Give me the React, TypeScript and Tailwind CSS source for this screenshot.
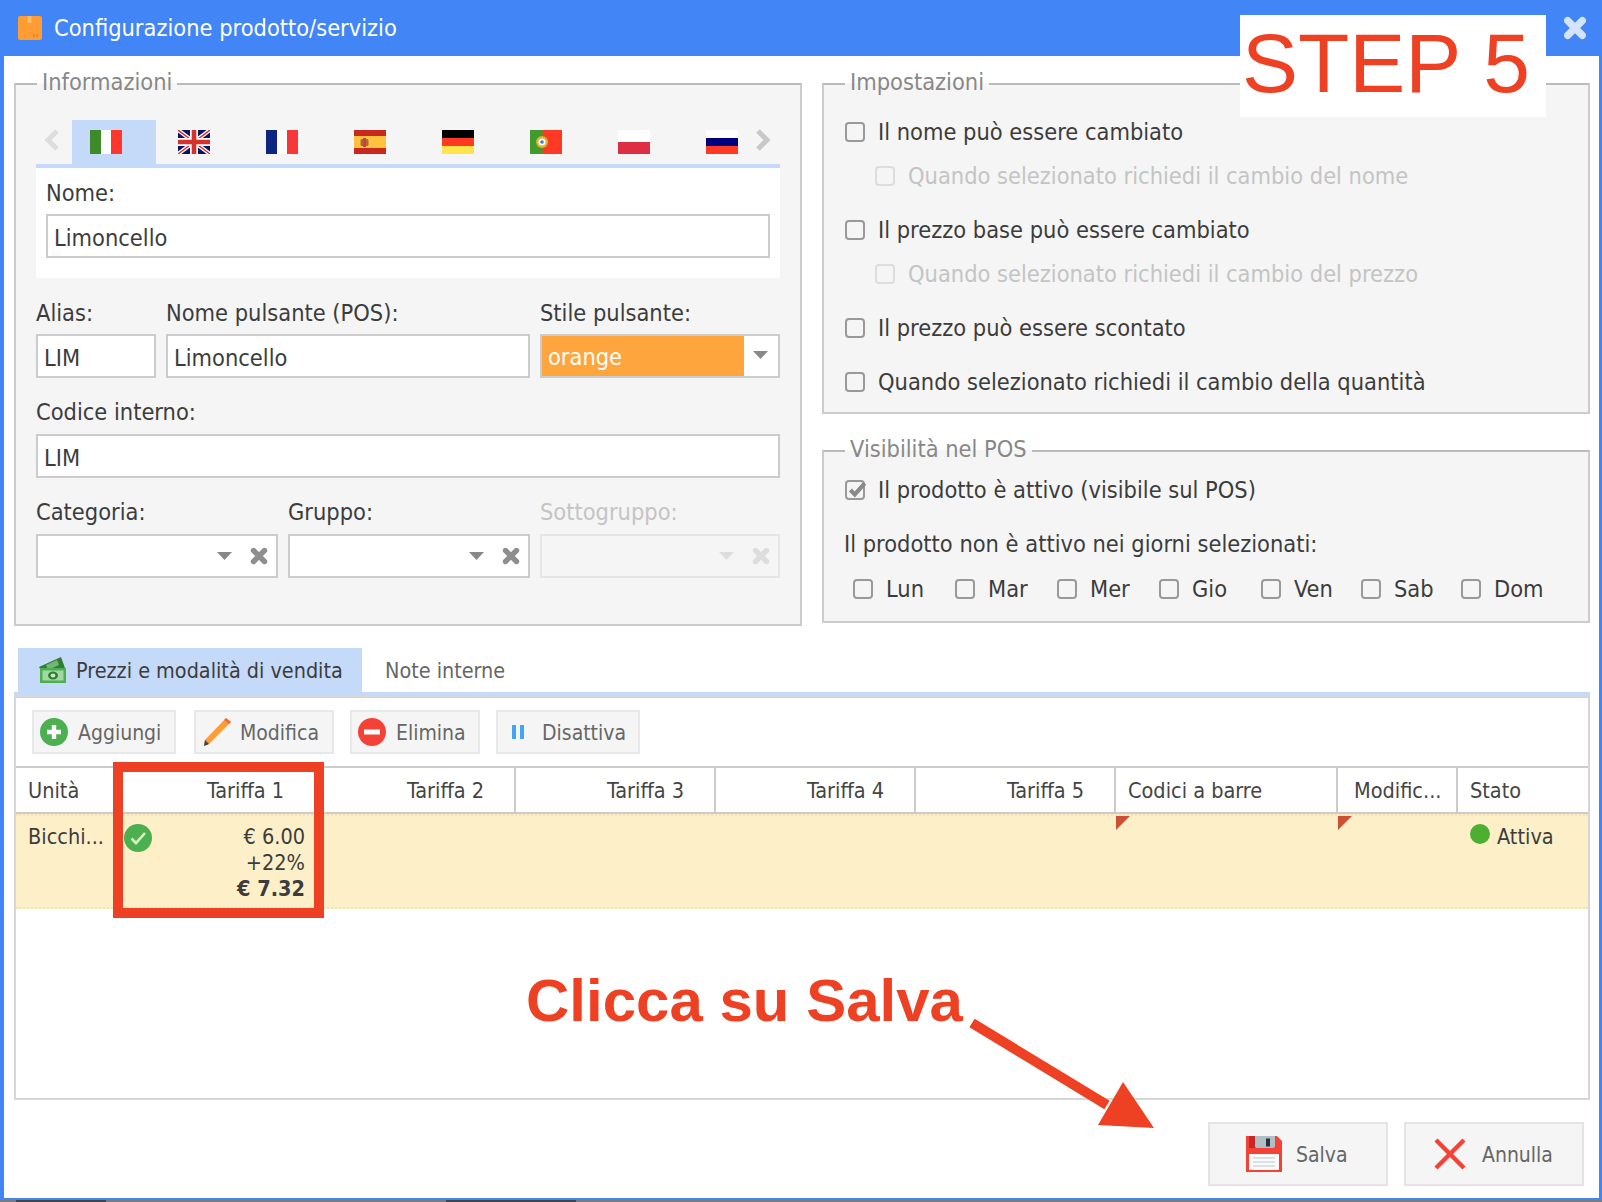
import type { ReactNode } from "react";

const FONT = "font-['DejaVu_Sans',sans-serif] font-stretch-condensed";

function Check({ on, off, className = "" }: { on?: boolean; off?: boolean; className?: string }) {
  return (
    <span
      className={`relative block h-[20px] w-[20px] shrink-0 rounded-[4px] border-2 ${off ? "border-[#dddddd]" : "border-[#999999]"} ${className}`}
    >
      {on && (
        <svg viewBox="0 0 20 20" className="absolute left-[-1px] top-[-3px] h-[22px] w-[22px]">
          <path d="M4 10l4 4 9-10" fill="none" stroke="#8a8a8a" strokeWidth="3.8" />
        </svg>
      )}
    </span>
  );
}

function Opt({ text, sub, className = "" }: { text: string; sub?: boolean; className?: string }) {
  return (
    <div className={`flex h-[28px] items-center gap-[13px] ${sub ? "pl-[51px] text-[#c4c4c4]" : "pl-[21px]"} ${className}`}>
      <Check off={sub} />
      <span className="relative top-[1px]">{text}</span>
    </div>
  );
}

function Box({ title, className, legendClass, children }: { title: string; className: string; legendClass: string; children: ReactNode }) {
  return (
    <fieldset className={`border-2 border-[#cccccc] border-t-[#bbbbbb] bg-[#f5f5f5] ${className}`}>
      <legend className={`px-[5px] leading-[28px] text-[#888888] ${legendClass}`}>
        <span className="relative top-[-2px]">{title}</span>
      </legend>
      {children}
    </fieldset>
  );
}

function Label({ children, off }: { children: ReactNode; off?: boolean }) {
  return <div className={`h-[28px] leading-[30px] ${off ? "text-[#c4c4c4]" : ""}`}>{children}</div>;
}

function Input({ value, className = "" }: { value: string; className?: string }) {
  return (
    <div className={`h-[44px] border-2 border-[#cccccc] bg-white pl-[6px] leading-[45px] ${className}`}>{value}</div>
  );
}

function Tri({ off }: { off?: boolean }) {
  return (
    <svg viewBox="0 0 15 8" className="h-[8px] w-[15px] shrink-0">
      <path d="M0 0h15L7.5 8z" fill={off ? "#dddddd" : "#888888"} />
    </svg>
  );
}

function ChunkyX({ color, className }: { color: string; className: string }) {
  return (
    <svg viewBox="0 0 18 18" className={className}>
      <path d="M3.5 3.5l11 11M14.5 3.5l-11 11" stroke={color} strokeWidth="5.4" strokeLinecap="round" />
    </svg>
  );
}

function Combo({ off }: { off?: boolean }) {
  return (
    <div
      className={`flex h-[44px] items-center justify-end gap-[18px] border-2 pr-[8px] ${off ? "border-[#e6e6e6] bg-[#f5f5f5]" : "border-[#cccccc] bg-white"}`}
    >
      <Tri off={off} />
      <ChunkyX color={off ? "#dddddd" : "#8e8e8e"} className="h-[18px] w-[18px]" />
    </div>
  );
}

function Flag({ children }: { children: ReactNode }) {
  return (
    <svg viewBox="0 0 32 24" className="block h-[24px] w-[32px]">
      {children}
    </svg>
  );
}

const flags: ReactNode[] = [
  <>
    <rect width="11" height="24" fill="#3d8b28" />
    <rect x="11" width="10" height="24" fill="#ffffff" />
    <rect x="21" width="11" height="24" fill="#ff372b" />
  </>,
  <>
    <rect width="32" height="24" fill="#0a1466" />
    <path d="M0 0l32 24M32 0L0 24" stroke="#ffffff" strokeWidth="4" />
    <path d="M0 0l32 24M32 0L0 24" stroke="#d8302a" strokeWidth="1.4" />
    <path d="M16 0v24M0 12h32" stroke="#ffffff" strokeWidth="8" />
    <path d="M16 0v24M0 12h32" stroke="#d8302a" strokeWidth="4.6" />
  </>,
  <>
    <rect width="11" height="24" fill="#0c2580" />
    <rect x="11" width="10" height="24" fill="#ffffff" />
    <rect x="21" width="11" height="24" fill="#f73838" />
  </>,
  <>
    <rect width="32" height="24" fill="#c8281e" />
    <rect y="6" width="32" height="12" fill="#ffc23f" />
    <rect x="6.5" y="9" width="8" height="7" rx="1.5" fill="#b5643a" />
    <rect x="9" y="8" width="3" height="9" fill="#c9433a" />
  </>,
  <>
    <rect width="32" height="8" fill="#000000" />
    <rect y="8" width="32" height="8" fill="#ff3a20" />
    <rect y="16" width="32" height="8" fill="#ffe44d" />
  </>,
  <>
    <rect width="32" height="24" fill="#ff3a24" />
    <rect width="12.5" height="24" fill="#419a2c" />
    <circle cx="12" cy="12" r="6" fill="#d8b52f" />
    <circle cx="12" cy="12" r="3.6" fill="#ffffff" />
    <circle cx="12" cy="12" r="1.8" fill="#5a6fd0" />
  </>,
  <>
    <rect width="32" height="12" fill="#ffffff" />
    <rect y="12" width="32" height="12" fill="#dd2e44" />
  </>,
  <>
    <rect width="32" height="8" fill="#ffffff" />
    <rect y="8" width="32" height="8" fill="#00007f" />
    <rect y="16" width="32" height="8" fill="#ff3a24" />
  </>,
];

function Chevron({ left }: { left?: boolean }) {
  return (
    <svg viewBox="0 0 16 24" className="h-[24px] w-[16px]">
      <path d={left ? "M13 3L4 12l9 9" : "M3 3l9 9-9 9"} fill="none" stroke={left ? "#dddddd" : "#c8c8c8"} strokeWidth="5" />
    </svg>
  );
}

function ToolBtn({ text, icon, className }: { text: string; icon: ReactNode; className: string }) {
  return (
    <div className={`flex h-[44px] items-center border-2 border-[#e8e8e8] bg-[#f5f5f5] text-[21px] text-[#666666] ${className}`}>
      {icon}
      <span className="relative top-[2px]">{text}</span>
    </div>
  );
}

const days: [string, string][] = [
  ["Lun", "w-[102px]"],
  ["Mar", "w-[102px]"],
  ["Mer", "w-[102px]"],
  ["Gio", "w-[102px]"],
  ["Ven", "w-[100px]"],
  ["Sab", "w-[100px]"],
  ["Dom", "w-[100px]"],
];

const headCell = "h-full border-r-2 border-[#cccccc] leading-[46px]";
const cols = "grid-cols-[100px_200px_200px_200px_200px_200px_222px_120px_130px]";

export default function App() {
  return (
    <div className={`relative h-[1202px] w-[1602px] overflow-hidden bg-[#7b7b7b] text-[23.4px] text-[#3c3c3c] ${FONT}`}>
      <div className="flex h-[1200px] flex-col border-b-2 border-l-4 border-r-[3px] border-[#4285f6] bg-white">
        <header className="flex h-[56px] shrink-0 items-center bg-[#4285f6] pl-[14px] pr-[12px] text-white">
          <svg viewBox="0 0 24 24" className="mr-[12px] h-[24px] w-[24px]">
            <rect width="24" height="24" rx="2" fill="#ff9c33" />
            <rect x="9.5" width="4" height="7" fill="#ffb866" />
            <path d="M16 18v3M19 18v3" stroke="#d8791c" strokeWidth="1" />
          </svg>
          <span className="relative top-[1px]">Configurazione prodotto/servizio</span>
          <ChunkyX color="#d5e4fd" className="ml-auto h-[24px] w-[24px]" />
        </header>

        <main className="flex min-h-0 flex-1 flex-col pl-[10px] pr-[9px] pt-[14px]">
          <div className="flex gap-[20px]">
            <Box title="Informazioni" legendClass="ml-[1px]" className="h-[556px] w-[788px] px-[20px]">
              <div className="mt-[22px] flex h-[48px] border-b-4 border-[#c5daf9]">
                <div className="flex w-[36px] items-start justify-center pr-[4px] pt-[8px]">
                  <Chevron left />
                </div>
                {flags.map((f, i) => (
                  <div key={i} className={i === 7 ? "w-[62px] pl-[18px]" : "w-[88px]"}>
                    <div className={`h-full w-[84px] pt-[10px] ${i === 7 ? "" : "pl-[18px]"} ${i === 0 ? "bg-[#c5daf9]" : ""}`}>
                      <Flag>{f}</Flag>
                    </div>
                  </div>
                ))}
                <div className="flex w-[30px] items-start justify-center pr-[4px] pt-[8px]">
                  <Chevron />
                </div>
              </div>
              <div className="bg-white px-[10px] pb-[20px] pt-[10px]">
                <Label>Nome:</Label>
                <Input value="Limoncello" className="mt-[8px]" />
              </div>
              <div className="mt-[20px] grid grid-cols-[120px_364px_240px] gap-x-[10px]">
                <div>
                  <Label>Alias:</Label>
                  <Input value="LIM" className="mt-[8px]" />
                </div>
                <div>
                  <Label>Nome pulsante (POS):</Label>
                  <Input value="Limoncello" className="mt-[8px]" />
                </div>
                <div>
                  <Label>Stile pulsante:</Label>
                  <div className="mt-[8px] flex h-[44px] border-2 border-[#cccccc] bg-white">
                    <div className="w-[202px] bg-[#ffa53e] pl-[6px] leading-[43px] text-white">orange</div>
                    <div className="flex flex-1 items-center justify-center pb-[2px] pr-[2px]">
                      <Tri />
                    </div>
                  </div>
                </div>
              </div>
              <div className="mt-[19px]">
                <Label>Codice interno:</Label>
                <Input value="LIM" className="mt-[9px]" />
              </div>
              <div className="mt-[19px] grid grid-cols-[242px_242px_240px] gap-x-[10px]">
                <div>
                  <Label>Categoria:</Label>
                  <div className="mt-[9px]">
                    <Combo />
                  </div>
                </div>
                <div>
                  <Label>Gruppo:</Label>
                  <div className="mt-[9px]">
                    <Combo />
                  </div>
                </div>
                <div>
                  <Label off>Sottogruppo:</Label>
                  <div className="mt-[9px]">
                    <Combo off />
                  </div>
                </div>
              </div>
            </Box>

            <div className="w-[768px]">
              <Box title="Impostazioni" legendClass="ml-[21px]" className="h-[344px]">
                <Opt text="Il nome può essere cambiato" className="mt-[20px]" />
                <Opt text="Quando selezionato richiedi il cambio del nome" sub className="mt-[16px]" />
                <Opt text="Il prezzo base può essere cambiato" className="mt-[26px]" />
                <Opt text="Quando selezionato richiedi il cambio del prezzo" sub className="mt-[16px]" />
                <Opt text="Il prezzo può essere scontato" className="mt-[26px]" />
                <Opt text="Quando selezionato richiedi il cambio della quantità" className="mt-[26px]" />
              </Box>
              <Box title="Visibilità nel POS" legendClass="ml-[21px]" className="mt-[23px] h-[186px]">
                <div className="mt-[11px] flex h-[28px] items-center gap-[13px] pl-[21px]">
                  <Check on />
                  <span className="relative top-[1px]">Il prodotto è attivo (visibile sul POS)</span>
                </div>
                <div className="mt-[25px] h-[28px] pl-[20px] leading-[30px]">Il prodotto non è attivo nei giorni selezionati:</div>
                <div className="mt-[18px] flex h-[28px] pl-[29px]">
                  {days.map(([d, w]) => (
                    <div key={d} className={`flex items-center gap-[13px] ${w}`}>
                      <Check />
                      <span className="relative top-[1px]">{d}</span>
                    </div>
                  ))}
                </div>
              </Box>
            </div>
          </div>

          <div className="mt-[22px] flex h-[44px] pl-[4px] text-[21.4px]">
            <div className="flex w-[344px] items-center gap-[10px] whitespace-nowrap bg-[#c5daf9] pl-[20px]">
              <svg viewBox="0 0 28 26" className="h-[26px] w-[28px] shrink-0">
                <path d="M1 10L23 0l4 11-20 9z" fill="#2f7d36" />
                <path d="M8 8l11-5 2 5-11 5z" fill="#6fb874" />
                <rect x="2" y="11" width="26" height="15" fill="#4caf50" />
                <rect x="4.5" y="13.5" width="21" height="10" fill="#a5d6a7" />
                <ellipse cx="15" cy="18.5" rx="5" ry="4" fill="#2e7d32" />
                <ellipse cx="15" cy="18.5" rx="2.4" ry="2" fill="#c8e6c9" />
              </svg>
              <span className="relative top-[1px]">Prezzi e modalità di vendita</span>
            </div>
            <div className="pl-[23px] leading-[46px] text-[#666666]">Note interne</div>
          </div>
          <div className="h-[4px] shrink-0 bg-[#c5daf9]" />

          <section className="h-[404px] shrink-0 border-2 border-[#d6d6d6] bg-white text-[21.5px]">
            <div className="flex h-[68px] gap-[16px] pl-[16px] pt-[12px]">
              <ToolBtn
                text="Aggiungi"
                className="mr-[2px] w-[144px] gap-[10px] pl-[6px]"
                icon={
                  <svg viewBox="0 0 28 28" className="h-[28px] w-[28px]">
                    <circle cx="14" cy="14" r="14" fill="#4caf50" />
                    <path d="M14 7v14M7 14h14" stroke="#ffffff" strokeWidth="4.4" />
                  </svg>
                }
              />
              <ToolBtn
                text="Modifica"
                className="w-[140px] gap-[9px] pl-[7px]"
                icon={
                  <svg viewBox="0 0 28 28" className="h-[28px] w-[28px]">
                    <path d="M23 0l5 4L6 26l-5 2 1-6z" fill="#ff9c33" />
                    <path d="M23 0l5 4-2 2-5-4z" fill="#ef6c4a" />
                    <path d="M2 22l-1 6 5-2z" fill="#444444" />
                  </svg>
                }
              />
              <ToolBtn
                text="Elimina"
                className="w-[130px] gap-[10px] pl-[6px]"
                icon={
                  <svg viewBox="0 0 28 28" className="h-[28px] w-[28px]">
                    <circle cx="14" cy="14" r="14" fill="#f44336" />
                    <rect x="6" y="11.5" width="16" height="5" fill="#ffffff" />
                  </svg>
                }
              />
              <ToolBtn
                text="Disattiva"
                className="w-[144px] gap-[15px] pl-[13px]"
                icon={
                  <svg viewBox="0 0 16 14" className="h-[14px] w-[16px]">
                    <path d="M1 0h4v14H1zM9 0h4v14H9z" fill="#42a5f5" />
                  </svg>
                }
              />
            </div>

            <div className={`grid h-[48px] ${cols} border-y-2 border-[#cccccc] text-[#444444]`}>
              <div className={`${headCell} pl-[12px]`}>Unità</div>
              {["Tariffa 1", "Tariffa 2", "Tariffa 3", "Tariffa 4", "Tariffa 5"].map((t) => (
                <div key={t} className={`${headCell} pr-[30px] text-right`}>
                  {t}
                </div>
              ))}
              <div className={`${headCell} pl-[12px]`}>Codici a barre</div>
              <div className={`${headCell} pl-[16px]`}>Modific...</div>
              <div className="pl-[12px] leading-[46px]">Stato</div>
            </div>

            <div className={`grid h-[95px] ${cols} border-y-2 border-dotted border-[#f1e3b5] bg-[#fdf0c9]`}>
              <div className="pl-[12px] pt-[7px] leading-[28px]">Bicchi...</div>
              <div className="relative pr-[11px] pt-[8px] text-right leading-[26px]">
                <svg viewBox="0 0 28 28" className="absolute left-[8px] top-[8px] h-[28px] w-[28px]">
                  <circle cx="14" cy="14" r="14" fill="#4caf50" />
                  <path d="M7.5 14.5l4.5 4.5 9-10" fill="none" stroke="#ddf5c0" strokeWidth="2.6" />
                </svg>
                <div>€ 6.00</div>
                <div>+22%</div>
                <div className="font-bold">€ 7.32</div>
              </div>
              <div />
              <div />
              <div />
              <div />
              <div className="h-[14px] w-[14px] bg-[#cc5033] [clip-path:polygon(0_0,100%_0,0_100%)]" />
              <div className="h-[14px] w-[14px] bg-[#cc5033] [clip-path:polygon(0_0,100%_0,0_100%)]" />
              <div className="flex items-start gap-[7px] pl-[12px] pt-[8px]">
                <span className="h-[20px] w-[20px] rounded-full bg-[#4caf32]" />
                <span className="leading-[26px]">Attiva</span>
              </div>
            </div>
          </section>

          <div className="mt-[22px] flex justify-end gap-[16px] pr-[6px] text-[21px] text-[#666666]">
            <div className="flex h-[64px] w-[180px] items-center border-2 border-[#e4e4e4] bg-[#f5f5f5] pl-[36px]">
              <svg viewBox="0 0 36 36" className="mr-[14px] h-[36px] w-[36px]">
                <path d="M0 0h31l5 5v31H0z" fill="#f44336" />
                <rect x="3" y="0" width="6" height="12" fill="#c62828" />
                <path d="M9 0h20v10a2 2 0 0 1-2 2H11a2 2 0 0 1-2-2z" fill="#b0bec5" />
                <rect x="20" y="2.5" width="4" height="8" fill="#263238" />
                <rect x="3" y="18" width="30" height="16" rx="1" fill="#fafafa" />
                <path d="M7 22h22M7 26h22M7 30h22" stroke="#cfd8dc" strokeWidth="1.6" />
              </svg>
              <span className="relative top-[2px]">Salva</span>
            </div>
            <div className="flex h-[64px] w-[180px] items-center border-2 border-[#e4e4e4] bg-[#f5f5f5] pl-[28px]">
              <svg viewBox="0 0 32 32" className="mr-[16px] h-[32px] w-[32px]">
                <path d="M2 2l28 28M30 2L2 30" stroke="#f44336" strokeWidth="4.4" />
              </svg>
              <span className="relative top-[2px]">Annulla</span>
            </div>
          </div>
        </main>
      </div>
      <div className="flex h-[2px] gap-[340px] pl-[16px]">
        <span className="w-[90px] bg-[#444444]" />
        <span className="w-[130px] bg-[#444444]" />
      </div>

      {/* annotations over the screenshot */}
      <div className="absolute left-[1240px] top-[15px] h-[102px] w-[306px] bg-white pl-[2px] font-['Liberation_Sans',sans-serif] text-[84px] leading-[96px] text-[#ee4023] [font-stretch:normal]">
        STEP 5
      </div>
      <div className="absolute left-[113px] top-[762px] h-[156px] w-[211px] border-[10px] border-[#ee4023]" />
      <div className="absolute left-[526px] top-[966px] font-['Liberation_Sans',sans-serif] text-[60px] font-bold leading-[70px] text-[#ee4023] [font-stretch:normal]">
        Clicca su Salva
      </div>
      <svg viewBox="0 0 1602 1202" className="pointer-events-none absolute left-0 top-0 h-[1202px] w-[1602px]">
        <path d="M972 1023l135 82" stroke="#ee4023" strokeWidth="10" fill="none" />
        <path d="M1123 1082l31 46-56-3z" fill="#ee4023" />
      </svg>
    </div>
  );
}
